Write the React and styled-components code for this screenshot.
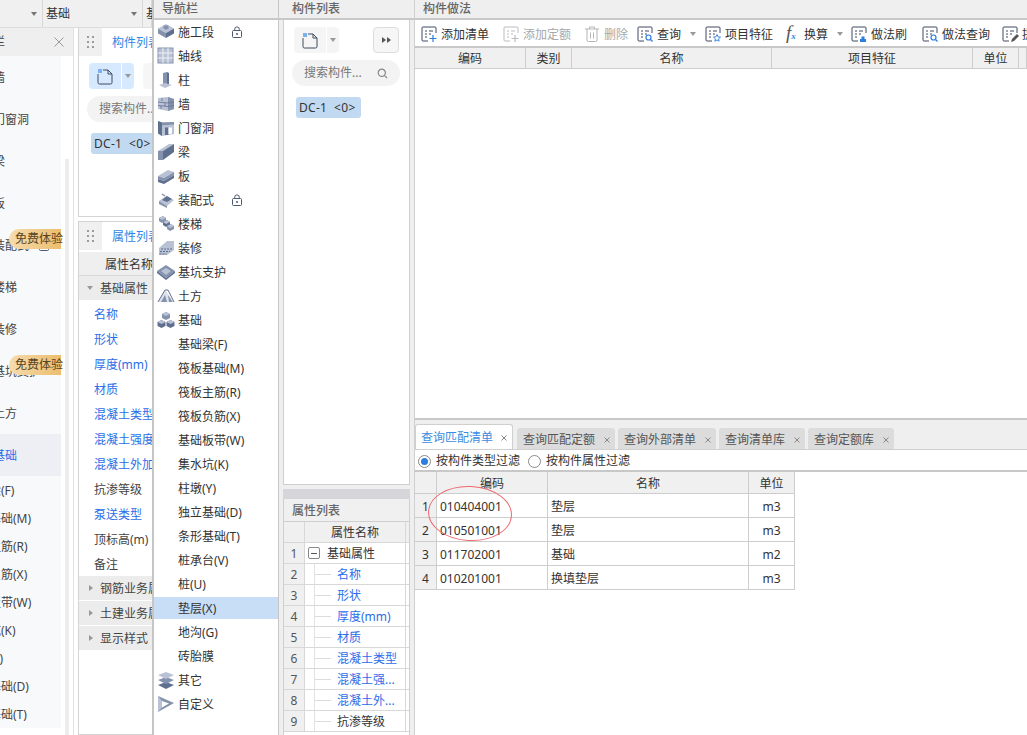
import React from "react";
import styled, { createGlobalStyle } from "styled-components";

const GlobalStyle = createGlobalStyle`
  html, body {
    margin: 0;
    padding: 0;
    background: #fff;
  }
  body {
    font-family: "Noto Sans", "Noto Sans CJK SC", sans-serif;
    font-size: 12px;
    color: #333;
  }
`;

const Page = styled.div`
  display: flex;
  position: relative;
  width: 1027px;
  height: 735px;
  overflow: hidden;
  white-space: nowrap;
  line-height: 16px;
`;

/* ---------- left, half hidden window ---------- */
const LeftZone = styled.div`
  display: flex;
  flex-direction: column;
  width: 152px;
  flex: none;
  overflow: hidden;
`;
const TopBar = styled.div`
  display: flex;
  height: 27px;
  flex: none;
  background: #f0f0f0;
  border-bottom: 1px solid #dcdcdc;
`;
const TopCell = styled.div`
  display: flex;
  align-items: center;
  justify-content: space-between;
  width: ${(p) => p.$w}px;
  flex: none;
  box-sizing: border-box;
  padding: 0 5px 0 3px;
  border-right: 1px solid #d8d8d8;
`;
const Caret = styled.i`
  display: block;
  flex: none;
  width: 0;
  height: 0;
  margin-left: ${(p) => p.$gap || 0}px;
  border-left: 3px solid transparent;
  border-right: 3px solid transparent;
  border-top: 4px solid ${(p) => p.$color || "#777"};
`;
const SideCaret = styled.i`
  display: block;
  flex: none;
  width: 0;
  height: 0;
  border-top: 3px solid transparent;
  border-bottom: 3px solid transparent;
  border-left: 4px solid ${(p) => p.$color || "#999"};
`;
const LeftBody = styled.div`
  display: flex;
  flex: 1;
  min-height: 0;
`;
const Sidebar = styled.div`
  position: relative;
  width: 74px;
  flex: none;
  box-sizing: border-box;
  border-right: 1px solid #e2e2e2;
  overflow: hidden;
`;
const SideTitle = styled.div`
  display: flex;
  align-items: center;
  justify-content: space-between;
  height: 28px;
  background: #efefef;
  padding-right: 9px;
  color: #444;
`;
const SideTitleText = styled.span`
  margin-left: -31px;
`;
const SideClose = styled.svg`
  width: 10px;
  height: 10px;
  flex: none;
`;
const SideList = styled.div`
  width: 61px;
  background: #f8f9fb;
`;
const SideRow = styled.div`
  position: relative;
  display: flex;
  align-items: center;
  height: ${(p) => (p.$sub ? 28 : 42)}px;
  background: ${(p) => (p.$active ? "#edeff4" : "transparent")};
  color: ${(p) => (p.$active ? "#2b6de8" : "#444")};
`;
const SideText = styled.span`
  margin: 2px 0 0 ${(p) => (p.$sub ? -35 : -7)}px;
`;
const Badge = styled.span`
  position: absolute;
  top: 5px;
  right: 0;
  width: 52px;
  height: 20px;
  box-sizing: border-box;
  padding-left: 6px;
  line-height: 20px;
  font-size: 12px;
  color: #5a4320;
  border-radius: 10px 0 0 10px;
  background: linear-gradient(90deg, #f6dcae, #ecbd6d);
`;
const SideScroll = styled.div`
  position: absolute;
  left: 65px;
  top: 131px;
  bottom: 0;
  width: 4px;
  background: #ececec;
`;
const Panels = styled.div`
  display: flex;
  flex-direction: column;
  gap: 4px;
  flex: 1;
  margin-left: 4px;
  min-width: 0;
  overflow: hidden;
`;
const DockPanel = styled.div`
  box-sizing: border-box;
  height: ${(p) => p.$h}px;
  flex: ${(p) => (p.$grow ? 1 : "none")};
  border: 1px solid #d4d4d4;
  border-right: 0;
  border-top-width: ${(p) => (p.$grow ? 1 : 0)}px;
  overflow: hidden;
`;
const DockHead = styled.div`
  display: flex;
  align-items: center;
  height: 28px;
`;
const Handle = styled.div`
  display: flex;
  align-items: center;
  justify-content: center;
  width: 23px;
  height: 100%;
  flex: none;
  background: #f0f0f0;
`;
const DockTitle = styled.span`
  margin: 2px 0 0 10px;
  color: #2f86e4;
`;
const PropHead = styled.div`
  height: 24px;
  box-sizing: border-box;
  margin-top: 2px;
  padding-left: 26px;
  line-height: 25px;
  background: #efefef;
  border-bottom: 1px solid #d8d8d8;
`;
const PropGroup = styled.div`
  display: flex;
  align-items: center;
  gap: 7px;
  height: 24px;
  margin-bottom: 1px;
  padding-left: ${(p) => (p.$open ? 8 : 10)}px;
  background: #ececec;
  color: #444;
`;
const GroupText = styled.span`
  margin-top: 2px;
`;
const PropRow = styled.div`
  display: flex;
  align-items: center;
  height: 25px;
  box-sizing: border-box;
  padding: 2px 0 0 15px;
  color: ${(p) => (p.$link ? "#2b6de8" : "#444")};
`;

/* ---------- component list, used twice ---------- */
const ListPane = styled.div`
  padding: 7px 0 0 10px;
`;
const ListTools = styled.div`
  display: flex;
  gap: ${(p) => p.$gap}px;
`;
const NewButton = styled.div`
  display: flex;
  width: 45px;
  height: 26px;
  flex: none;
  border-radius: 4px;
  overflow: hidden;
  gap: 1px;
`;
const NewMain = styled.div`
  display: flex;
  align-items: center;
  justify-content: center;
  width: 32px;
  background: ${(p) => p.$bg};
`;
const NewArrow = styled.div`
  display: flex;
  align-items: center;
  justify-content: center;
  flex: 1;
  background: ${(p) => p.$bg};
`;
const MoreButton = styled.div`
  display: flex;
  align-items: center;
  justify-content: center;
  gap: 1px;
  width: 26px;
  height: 26px;
  flex: none;
  box-sizing: border-box;
  border-radius: 4px;
  background: #f6f6f6;
  border: 1px solid ${(p) => (p.$plain ? "#f6f6f6" : "#dddddd")};
`;
const SearchBox = styled.div`
  display: flex;
  align-items: center;
  justify-content: space-between;
  width: 108px;
  height: 26px;
  margin: 7px 0 0 -2px;
  box-sizing: border-box;
  padding: 0 12px;
  flex: none;
  border-radius: 13px;
  background: #f3f3f3;
  color: #777;
`;
const Chip = styled.div`
  width: 65px;
  height: 21px;
  margin: 11px 0 0 2px;
  box-sizing: border-box;
  padding-left: 3px;
  line-height: 21px;
  border-radius: 3px;
  background: #c2d9f2;
  white-space: pre;
  letter-spacing: 0.3px;
`;

/* ---------- navigation ---------- */
const NavPanel = styled.div`
  width: 127px;
  flex: none;
  box-sizing: border-box;
  background: #fff;
  border-left: 2px solid #c6c6c6;
  border-right: 1px solid #c6c6c6;
`;
const PaneTitle = styled.div`
  height: 18px;
  box-sizing: content-box;
  padding-left: ${(p) => p.$pad}px;
  line-height: 17px;
  background: #efefef;
  border-bottom: 2px solid #c8c8c8;
  color: #666;
  font-weight: 500;
`;
const NavList = styled.div`
  display: flex;
  flex-direction: column;
  gap: 2px;
  padding-top: 1px;
`;
const NavRow = styled.div`
  display: flex;
  align-items: center;
  height: 22px;
  flex: none;
  background: ${(p) => (p.$active ? "#c8ddf6" : "transparent")};
`;
const NavText = styled.span`
  margin-top: 2px;
`;
const NavIconSlot = styled.div`
  display: flex;
  justify-content: center;
  width: 24px;
  flex: none;
`;
const LockSlot = styled.svg`
  width: 10px;
  height: 12px;
  margin-left: ${(p) => p.$gap}px;
  flex: none;
`;

/* ---------- middle column ---------- */
const MiddleCol = styled.div`
  display: flex;
  flex-direction: column;
  width: 135px;
  flex: none;
  background: #efefef;
`;
const MiddleBody = styled.div`
  display: flex;
  flex-direction: column;
  flex: 1;
  min-height: 0;
  padding: 0 4px;
`;
const ListFrame = styled.div`
  height: 465px;
  flex: none;
  box-sizing: border-box;
  background: #fff;
  border-left: 1px solid #cfcfcf;
  border-right: 1px solid #cfcfcf;
  border-bottom: 1px solid #cfcfcf;
`;
const GripBar = styled.div`
  height: 10px;
  margin-top: 4px;
  flex: none;
  background: #d6d6da;
`;
const PropFrame = styled.div`
  flex: 1;
  min-height: 0;
  border-left: 1px solid #cfcfcf;
  border-right: 1px solid #cfcfcf;
  background: #fff;
`;
const PropFrameTitle = styled.div`
  height: 23px;
  box-sizing: border-box;
  padding-left: 8px;
  line-height: 23px;
  background: #f0f0f0;
  border-bottom: 1px solid #cfcfcf;
  color: #666;
  font-weight: 500;
`;
const TreeRow = styled.div`
  display: grid;
  grid-template-columns: 21px 101px;
  height: 21px;
  box-sizing: border-box;
  border-bottom: 1px solid #d8d8d8;
  background: ${(p) => (p.$head ? "#f0f0f0" : "#fff")};
`;
const TreeNum = styled.div`
  display: flex;
  align-items: center;
  justify-content: center;
  padding-top: 2px;
  background: #f0f0f0;
  border-right: 1px solid #d8d8d8;
  color: #555;
`;
const TreeName = styled.div`
  position: relative;
  display: flex;
  align-items: center;
  justify-content: ${(p) => (p.$center ? "center" : "flex-start")};
  padding: 2px 0 0 ${(p) => (p.$center ? 0 : p.$indent)}px;
  border-right: 1px solid #d8d8d8;
  color: ${(p) => (p.$link ? "#2b6de8" : "#333")};
`;
const TreeBox = styled.span`
  display: flex;
  align-items: center;
  justify-content: center;
  width: 12px;
  height: 12px;
  margin: -2px 7px 0 0;
  box-sizing: border-box;
  border: 1px solid #888;
  border-radius: 2px;
  &::before {
    content: "";
    width: 6px;
    height: 1px;
    background: #555;
  }
`;
const TreeLine = styled.span`
  position: absolute;
  left: 9px;
  top: 0;
  bottom: 0;
  width: 16px;
  border-left: 1px solid #e2e2e2;
  &::after {
    content: "";
    position: absolute;
    left: 0;
    right: 0;
    top: 10px;
    border-top: 1px solid #dcdcdc;
  }
`;

/* ---------- right column ---------- */
const RightCol = styled.div`
  display: flex;
  flex-direction: column;
  flex: 1;
  min-width: 0;
  border-left: 1px solid #cfcfcf;
  background: #fff;
`;
const Toolbar = styled.div`
  display: flex;
  align-items: center;
  height: 28px;
  flex: none;
  box-sizing: border-box;
  padding: 2px 0 0 5px;
  border-bottom: 2px solid #c8c8c8;
`;
const ToolItem = styled.div`
  display: flex;
  align-items: center;
  flex: none;
  gap: 3px;
  width: ${(p) => p.$w}px;
  color: ${(p) => (p.$off ? "#a8a8a8" : "#333")};
`;
const ToolText = styled.span`
  margin-top: 1px;
`;
const FxMark = styled.span`
  display: flex;
  align-items: baseline;
  width: 17px;
  box-sizing: border-box;
  padding-left: 2px;
  font-family: "Liberation Serif", serif;
  font-style: italic;
  font-size: 19px;
  color: #555;
  & > b {
    font-size: 9px;
    color: #2f86e4;
    font-weight: 700;
  }
`;
const GridRow = styled.div`
  display: grid;
  grid-template-columns: ${(p) => p.$cols};
  width: ${(p) => (p.$w ? `${p.$w}px` : "auto")};
  height: ${(p) => p.$h}px;
  flex: none;
  box-sizing: border-box;
  border-bottom: 1px solid #cdcdcd;
  background: ${(p) => (p.$head ? "#f0f0f0" : "#fff")};
`;
const Cell = styled.div`
  display: flex;
  align-items: center;
  justify-content: ${(p) => (p.$left ? "flex-start" : "center")};
  padding: 2px 0 0 ${(p) => (p.$left ? 3 : 0)}px;
  border-right: 1px solid #cdcdcd;
  background: ${(p) => (p.$shade ? "#f0f0f0" : "transparent")};
`;
const EmptyBody = styled.div`
  height: 349px;
  flex: none;
  border-bottom: 2px solid #c8c8c8;
  box-sizing: content-box;
`;
const TabStrip = styled.div`
  display: flex;
  align-items: flex-end;
  gap: 3px;
  height: 29px;
  flex: none;
  background: #efefef;
`;
const Tab = styled.div`
  display: flex;
  align-items: center;
  justify-content: space-between;
  width: ${(p) => p.$w}px;
  height: ${(p) => (p.$active ? 25 : 21)}px;
  margin-right: ${(p) => (p.$active ? 1 : 0)}px;
  box-sizing: border-box;
  padding: 2px 5px 0 ${(p) => (p.$active ? 5 : 6)}px;
  border-radius: 3px 3px 0 0;
  background: ${(p) => (p.$active ? "#fff" : "#dcdcdc")};
  border: ${(p) => (p.$active ? "1px solid #cfcfcf" : "0")};
  border-bottom: 0;
  color: ${(p) => (p.$active ? "#3b8de0" : "#555")};
`;
const TabX = styled.svg`
  width: 6px;
  height: 6px;
  flex: none;
`;
const FilterRow = styled.div`
  display: flex;
  align-items: center;
  height: 23px;
  flex: none;
  padding: 2px 0 0 3px;
  box-sizing: border-box;
  border-top: 1px solid #cfcfcf;
  border-bottom: 2px solid #c8c8c8;
`;
const Radio = styled.span`
  display: flex;
  align-items: center;
  justify-content: center;
  width: 13px;
  height: 13px;
  margin-right: 5px;
  box-sizing: border-box;
  border-radius: 50%;
  border: 1px solid #8a8a8a;
  &::before {
    content: "";
    width: 7px;
    height: 7px;
    border-radius: 50%;
    background: ${(p) => (p.$on ? "#2b7de0" : "transparent")};
  }
`;
const RadioLabel = styled.span`
  margin-right: 8px;
`;
const RedRing = styled.svg`
  position: absolute;
  left: 427px;
  top: 484px;
  width: 86px;
  height: 59px;
  pointer-events: none;
`;

/* ---------- drawings ---------- */
const Dots = () => (
  <svg width="8" height="14" viewBox="0 0 8 14">
    {[1, 6, 11].map((y) => (
      <g key={y} fill="#9a9a9a">
        <rect x="0" y={y} width="2" height="2" />
        <rect x="5" y={y} width="2" height="2" />
      </g>
    ))}
  </svg>
);

const NewDoc = () => (
  <svg width="16" height="17" viewBox="0 0 16 17">
    <path d="M1 6v8.5a1.5 1.5 0 0 0 1.5 1.5h11a1.5 1.5 0 0 0 1.5-1.5V6l-4-4H6" fill="none" stroke="#3d4a60" strokeWidth="1" />
    <path d="M11 2v4h4" fill="none" stroke="#3d4a60" strokeWidth="1" />
    <rect x="1" y="1" width="4" height="4" fill="#3d8ce8" />
    <path d="M2 1v4M4 1v4M1 2h4M1 4h4" stroke="#cfe3fb" strokeWidth="0.5" />
  </svg>
);

const Search = () => (
  <svg width="11" height="11" viewBox="0 0 11 11" fill="none" stroke="#888" strokeWidth="1.2">
    <circle cx="4.8" cy="4.8" r="3.6" />
    <path d="M7.6 7.6L10 10" />
  </svg>
);

const Lock = ({ gap }) => (
  <LockSlot $gap={gap} viewBox="0 0 10 12" fill="none" stroke="#4d5a72">
    <path d="M2.7 5V3.2a2.3 2.3 0 0 1 4.6 0V5" />
    <rect x="0.5" y="4.5" width="9" height="7" rx="1" />
    <circle cx="5" cy="8" r="1" fill="#4d5a72" stroke="none" />
  </LockSlot>
);

const Cross = ({ color }) => (
  <TabX viewBox="0 0 6 6" stroke={color || "#888"} strokeWidth="1">
    <path d="M0.5 0.5L5.5 5.5M5.5 0.5L0.5 5.5" />
  </TabX>
);

const D = "#5f6f90";
const M = "#8492ae";
const L = "#b9c2d5";

const navShapes = {
  stage: (
    <>
      <path d="M9 1l8 4.5-8 4.5-8-4.5z" fill={L} />
      <path d="M1 5.5v5L9 15v-5z" fill={M} />
      <path d="M17 5.5v5L9 15v-5z" fill={D} />
      <path d="M6.5 2.5h5v3l-2.5 1.3-2.5-1.3z" fill={M} />
    </>
  ),
  axis: (
    <>
      <rect x="1" y="1" width="15" height="15" fill={L} stroke={M} />
      <path d="M6 1v15M11 1v15M1 6h15M1 11h15" stroke="#eef0f5" />
    </>
  ),
  column: (
    <>
      <path d="M6 2l4-1v12H6z" fill={M} />
      <path d="M10 1l2 1v11h-2z" fill={D} />
      <path d="M2 14l6-2 7 2-7 3z" fill={L} />
    </>
  ),
  wall: (
    <>
      <path d="M1 3l10-1 6 2v10l-6 2-10-2z" fill={L} />
      <path d="M11 2l6 2v10l-6 2z" fill={M} />
      <path d="M1 7l10 1 6-1M1 10.5l10 1 6-1M5 3v3M8 8v3M4 11v3" stroke={D} strokeWidth="0.8" fill="none" />
    </>
  ),
  door: (
    <>
      <path d="M1 2l4 1.5 12-.5v12l-12 2-4-2.5z" fill={L} />
      <path d="M1 2l4 1.5V17l-4-2.5z" fill={D} />
      <path d="M5 3.5l12-.5v2.5l-12 .7z" fill={M} />
      <path d="M8 8.5h3.5V16H8z" fill={D} />
      <path d="M11.5 8.5H15v6l-3.5.8z" fill="#fff" />
    </>
  ),
  beam: (
    <>
      <path d="M1 8l11-7h5L6 8z" fill={L} />
      <path d="M1 8h5v9H1z" fill={M} />
      <path d="M6 8l11-7v8L6 17z" fill={D} />
    </>
  ),
  slab: (
    <>
      <path d="M1 9l10-6 6 2-10 6z" fill={L} />
      <path d="M1 9l6 2 10-6v3L7 14l-6-2z" fill={M} />
      <path d="M1 12l6 2 10-6v3L7 17l-6-2z" fill={D} />
    </>
  ),
  precast: (
    <>
      <path d="M2 10l7-5 8 4-7 6z" fill={L} />
      <path d="M5 9l5-4 5 3-5 3z" fill={D} />
      <path d="M2 10l8 5v2l-8-4z" fill={M} />
      <path d="M5 3l3 2" stroke={M} strokeWidth="1.5" />
    </>
  ),
  stairs: (
    <>
      <path d="M2 3l4-2 3 2v3l-4 2-3-2z" fill={M} />
      <path d="M6 7l4-2 3 2v3l-4 2-3-2z" fill={D} />
      <path d="M10 11l4-2 3 2v3l-4 2-3-2z" fill={M} />
      <path d="M2 3l4-2 3 2-4 2zM6 7l4-2 3 2-4 2zM10 11l4-2 3 2-4 2z" fill={L} />
    </>
  ),
  finish: (
    <>
      <path d="M2 9l8-7h7v9l-7 5H2z" fill={L} />
      <path d="M4 10h11M3 12.5h10M2.5 15h7" stroke={D} strokeDasharray="2 1" />
    </>
  ),
  pit: (
    <>
      <path d="M9 2l9 6-9 7-9-7z" fill={M} />
      <path d="M9 5l5 3-5 4-5-4z" fill={L} />
      <path d="M9 15v2l-9-7V8zM9 15v2l9-7V8z" fill={D} />
    </>
  ),
  earth: (
    <>
      <path d="M1 15L8 3l9 12z" fill="#dde1ea" />
      <path d="M4 15L8 8l2 7zM11 8l4.5 7H12z" fill={M} />
      <path d="M1 15L8 3h3l6 12" fill="none" stroke={D} />
    </>
  ),
  found: (
    <>
      <path d="M9 1l4 2v4l-4 2-4-2V3z" fill={M} />
      <path d="M4.5 9l4 2v4l-4 2-4-2v-4z" fill={D} />
      <path d="M13.5 9l4 2v4l-4 2-4-2v-4z" fill={D} />
      <path d="M9 1l4 2-4 2-4-2zM4.5 9l4 2-4 2-4-2zM13.5 9l4 2-4 2-4-2z" fill={L} />
    </>
  ),
  other: (
    <>
      <path d="M9 11l8 3-8 4-8-4z" fill={D} />
      <path d="M9 6l8 3-8 4-8-4z" fill={M} />
      <path d="M9 1l8 3-8 4-8-4z" fill={L} />
    </>
  ),
  custom: (
    <>
      <path d="M1 1l16 7-16 9z" fill={M} />
      <path d="M5 6l7 2.5-7 4z" fill="#fff" />
      <path d="M1 1v16l4-4.5V6z" fill={L} />
    </>
  ),
};

const NavShape = ({ name }) => (
  <svg width="18" height="18" viewBox="0 0 18 18">
    {navShapes[name]}
  </svg>
);

const Sheet = ({ color, children }) => (
  <svg width="18" height="18" viewBox="0 0 18 18" fill="none" style={{ flex: "none" }}>
    <path d="M16 8V3a1 1 0 0 0-1-1H3a1 1 0 0 0-1 1v12a1 1 0 0 0 1 1h5" stroke={color} />
    <path d="M5 6h2M9 6h4M5 9h2M9 9h2M5 12h2" stroke={color} />
    {children}
  </svg>
);

const toolBadges = {
  plus: <path d="M13 10v7M9.5 13.5h7" stroke="#2b7de0" strokeWidth="1.2" />,
  plusOff: <path d="M13 10v7M9.5 13.5h7" stroke="#bbb" strokeWidth="1.2" />,
  search: (
    <>
      <circle cx="12.5" cy="12.5" r="2.5" stroke="#2b7de0" strokeWidth="1.2" />
      <path d="M14.5 14.5l2 2" stroke="#2b7de0" strokeWidth="1.2" />
    </>
  ),
  star: <path d="M13 9.5l1 2.3 2.5.3-1.9 1.7.5 2.4-2.1-1.2-2.1 1.2.5-2.4-1.9-1.7 2.5-.3z" stroke="#2b7de0" strokeWidth="0.9" />,
  brush: <path d="M10 17v-3h1.5v-2.5h3V14H16v3z" fill="#2b7de0" />,
  pen: <path d="M10 17l1-3 5-5 2 2-5 5z" fill="#555" />,
};

const Trash = () => (
  <svg width="18" height="18" viewBox="0 0 18 18" fill="none" stroke="#b5b5b5" style={{ flex: "none" }}>
    <path d="M2 4h14M6.5 4V2h5v2M4 4v11a1.5 1.5 0 0 0 1.5 1.5h7A1.5 1.5 0 0 0 14 15V4M7.5 7.5v6M10.5 7.5v6" />
  </svg>
);

const sideTop = [
  { text: "墙" },
  { text: "门窗洞" },
  { text: "梁" },
  { text: "板" },
  { text: "装配式", lock: true, badge: true },
  { text: "楼梯" },
  { text: "装修" },
  { text: "基坑支护", badge: true },
  { text: "土方" },
  { text: "基础", active: true },
];
const sideSub = ["基础梁(F)", "筏板基础(M)", "筏板主筋(R)", "筏板负筋(X)", "基础板带(W)", "集水坑(K)", "柱墩(Y)", "独立基础(D)", "条形基础(T)"];

const navItems = [
  { text: "施工段", icon: "stage", lock: true },
  { text: "轴线", icon: "axis" },
  { text: "柱", icon: "column" },
  { text: "墙", icon: "wall" },
  { text: "门窗洞", icon: "door" },
  { text: "梁", icon: "beam" },
  { text: "板", icon: "slab" },
  { text: "装配式", icon: "precast", lock: true },
  { text: "楼梯", icon: "stairs" },
  { text: "装修", icon: "finish" },
  { text: "基坑支护", icon: "pit" },
  { text: "土方", icon: "earth" },
  { text: "基础", icon: "found" },
  { text: "基础梁(F)" },
  { text: "筏板基础(M)" },
  { text: "筏板主筋(R)" },
  { text: "筏板负筋(X)" },
  { text: "基础板带(W)" },
  { text: "集水坑(K)" },
  { text: "柱墩(Y)" },
  { text: "独立基础(D)" },
  { text: "条形基础(T)" },
  { text: "桩承台(V)" },
  { text: "桩(U)" },
  { text: "垫层(X)", active: true },
  { text: "地沟(G)" },
  { text: "砖胎膜" },
  { text: "其它", icon: "other" },
  { text: "自定义", icon: "custom" },
];

const leftProps = [
  { text: "名称", link: true },
  { text: "形状", link: true },
  { text: "厚度(mm)", link: true },
  { text: "材质", link: true },
  { text: "混凝土类型", link: true },
  { text: "混凝土强度等级", link: true },
  { text: "混凝土外加剂", link: true },
  { text: "抗渗等级" },
  { text: "泵送类型", link: true },
  { text: "顶标高(m)" },
  { text: "备注" },
];

const treeRows = [
  { text: "名称", link: true },
  { text: "形状", link: true },
  { text: "厚度(mm)", link: true },
  { text: "材质", link: true },
  { text: "混凝土类型", link: true },
  { text: "混凝土强...", link: true },
  { text: "混凝土外...", link: true },
  { text: "抗渗等级" },
];

const tools = [
  { text: "添加清单", w: 82, badge: "plus", color: "#3d4a60" },
  { text: "添加定额", w: 81, badge: "plusOff", color: "#bbb", off: true },
  { trash: true, text: "删除", w: 53, off: true },
  { text: "查询", w: 68, badge: "search", color: "#3d4a60", caret: true },
  { text: "项目特征", w: 80, badge: "star", color: "#3d4a60" },
  { fx: true, text: "换算", w: 66, caret: true },
  { text: "做法刷", w: 71, badge: "brush", color: "#3d4a60" },
  { text: "做法查询", w: 80, badge: "search", color: "#3d4a60" },
  { text: "提取做法", w: 80, badge: "pen", color: "#3d4a60" },
];

const tabs = [
  { text: "查询匹配清单", w: 98, active: true },
  { text: "查询匹配定额", w: 98 },
  { text: "查询外部清单", w: 98 },
  { text: "查询清单库", w: 86 },
  { text: "查询定额库", w: 86 },
];

const topCols = "111px 46px 200px 201px 46px 8px";
const matchCols = "22px 111px 201px 46px";
const matches = [
  ["1", "010404001", "垫层", "m3"],
  ["2", "010501001", "垫层", "m3"],
  ["3", "011702001", "基础", "m2"],
  ["4", "010201001", "换填垫层", "m3"],
];

function ComponentList({ active, gap, plain }) {
  const bg = active ? "#d6e9ff" : "#f5f5f5";
  return (
    <ListPane>
      <ListTools $gap={gap}>
        <NewButton>
          <NewMain $bg={bg}>
            <NewDoc />
          </NewMain>
          <NewArrow $bg={bg}>
            <Caret $color="#999" />
          </NewArrow>
        </NewButton>
        <MoreButton $plain={plain}>
          {!plain && <SideCaret $color="#555" />}
          {!plain && <SideCaret $color="#555" />}
        </MoreButton>
      </ListTools>
      <SearchBox>
        搜索构件...
        <Search />
      </SearchBox>
      <Chip>{"DC-1  <0>"}</Chip>
    </ListPane>
  );
}

export default function App() {
  return (
    <Page>
      <GlobalStyle />
      <LeftZone>
        <TopBar>
          <TopCell $w={43}>
            <span />
            <Caret />
          </TopCell>
          <TopCell $w={100}>
            基础
            <Caret />
          </TopCell>
          <TopCell $w={9}>基础</TopCell>
        </TopBar>
        <LeftBody>
          <Sidebar>
            <SideTitle>
              <SideTitleText>导航栏</SideTitleText>
              <SideClose viewBox="0 0 10 10" stroke="#999" strokeWidth="1">
                <path d="M0.5 0.5L9.5 9.5M9.5 0.5L0.5 9.5" />
              </SideClose>
            </SideTitle>
            <SideList>
              {sideTop.map((item) => (
                <SideRow key={item.text} $active={item.active}>
                  <SideText>{item.text}</SideText>
                  {item.lock && <Lock gap={10} />}
                  {item.badge && <Badge>免费体验</Badge>}
                </SideRow>
              ))}
              {sideSub.map((text) => (
                <SideRow key={text} $sub>
                  <SideText $sub>{text}</SideText>
                </SideRow>
              ))}
            </SideList>
            <SideScroll />
          </Sidebar>
          <Panels>
            <DockPanel $h={189}>
              <DockHead>
                <Handle>
                  <Dots />
                </Handle>
                <DockTitle>构件列表</DockTitle>
              </DockHead>
              <ComponentList active gap={9} plain />
            </DockPanel>
            <DockPanel $grow>
              <DockHead>
                <Handle>
                  <Dots />
                </Handle>
                <DockTitle>属性列表</DockTitle>
              </DockHead>
              <PropHead>属性名称</PropHead>
              <PropGroup $open>
                <Caret $color="#999" />
                <GroupText>基础属性</GroupText>
              </PropGroup>
              {leftProps.map((row) => (
                <PropRow key={row.text} $link={row.link}>
                  {row.text}
                </PropRow>
              ))}
              {["钢筋业务属性", "土建业务属性", "显示样式"].map((text) => (
                <PropGroup key={text}>
                  <SideCaret />
                  <GroupText>{text}</GroupText>
                </PropGroup>
              ))}
            </DockPanel>
          </Panels>
        </LeftBody>
      </LeftZone>

      <NavPanel>
        <PaneTitle $pad={8}>导航栏</PaneTitle>
        <NavList>
          {navItems.map((item) => (
            <NavRow key={item.text} $active={item.active}>
              <NavIconSlot>{item.icon && <NavShape name={item.icon} />}</NavIconSlot>
              <NavText>{item.text}</NavText>
              {item.lock && <Lock gap={18} />}
            </NavRow>
          ))}
        </NavList>
      </NavPanel>

      <MiddleCol>
        <PaneTitle $pad={13}>构件列表</PaneTitle>
        <MiddleBody>
          <ListFrame>
            <ComponentList gap={34} />
          </ListFrame>
          <GripBar />
          <PropFrame>
            <PropFrameTitle>属性列表</PropFrameTitle>
            <TreeRow $head>
              <TreeNum />
              <TreeName $center>属性名称</TreeName>
            </TreeRow>
            <TreeRow>
              <TreeNum>1</TreeNum>
              <TreeName $indent={3}>
                <TreeBox />
                基础属性
              </TreeName>
            </TreeRow>
            {treeRows.map((row, i) => (
              <TreeRow key={row.text}>
                <TreeNum>{i + 2}</TreeNum>
                <TreeName $indent={32} $link={row.link}>
                  <TreeLine />
                  {row.text}
                </TreeName>
              </TreeRow>
            ))}
          </PropFrame>
        </MiddleBody>
      </MiddleCol>

      <RightCol>
        <PaneTitle $pad={8}>构件做法</PaneTitle>
        <Toolbar>
          {tools.map((tool) => (
            <ToolItem key={tool.text} $w={tool.w} $off={tool.off}>
              {tool.trash && <Trash />}
              {tool.fx && (
                <FxMark>
                  f<b>x</b>
                </FxMark>
              )}
              {tool.badge && <Sheet color={tool.color}>{toolBadges[tool.badge]}</Sheet>}
              <ToolText>{tool.text}</ToolText>
              {tool.caret && <Caret $color="#999" $gap={6} />}
            </ToolItem>
          ))}
        </Toolbar>
        <GridRow $head $cols={topCols} $h={21}>
          <Cell>编码</Cell>
          <Cell>类别</Cell>
          <Cell>名称</Cell>
          <Cell>项目特征</Cell>
          <Cell>单位</Cell>
          <Cell />
        </GridRow>
        <EmptyBody />
        <TabStrip>
          {tabs.map((tab) => (
            <Tab key={tab.text} $w={tab.w} $active={tab.active}>
              {tab.text}
              <Cross />
            </Tab>
          ))}
        </TabStrip>
        <FilterRow>
          <Radio $on />
          <RadioLabel>按构件类型过滤</RadioLabel>
          <Radio />
          <RadioLabel>按构件属性过滤</RadioLabel>
        </FilterRow>
        <GridRow $head $cols={matchCols} $w={380} $h={22}>
          <Cell />
          <Cell>编码</Cell>
          <Cell>名称</Cell>
          <Cell>单位</Cell>
        </GridRow>
        {matches.map(([num, code, name, unit]) => (
          <GridRow key={num} $cols={matchCols} $w={380} $h={24}>
            <Cell $shade>{num}</Cell>
            <Cell $left>{code}</Cell>
            <Cell $left>{name}</Cell>
            <Cell>{unit}</Cell>
          </GridRow>
        ))}
      </RightCol>

      <RedRing viewBox="0 0 86 59" fill="none">
        <ellipse cx="43" cy="29.5" rx="41.5" ry="27" stroke="#ee6a70" strokeWidth="1" transform="rotate(3 43 29.5)" />
      </RedRing>
    </Page>
  );
}
